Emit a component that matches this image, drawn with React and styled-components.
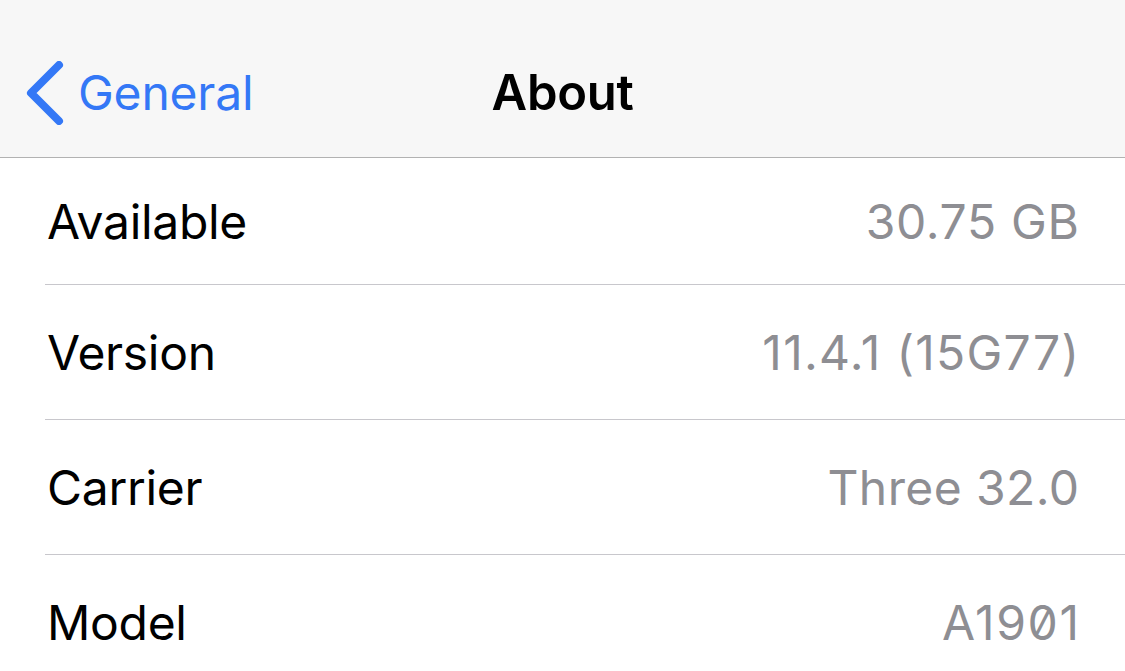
import React from "react";
import styled, { createGlobalStyle } from "styled-components";

const Global = createGlobalStyle`
  html, body { margin: 0; padding: 0; background: #ffffff; }
  body { font-family: Inter, "Liberation Sans", sans-serif; -webkit-font-smoothing: antialiased; }
`;

const Screen = styled.div`
  width: 1125px;
  height: 671px;
  overflow: hidden;
  background: #ffffff;
  display: flex;
  flex-direction: column;
`;

const NavBar = styled.header`
  flex: none;
  height: 158px;
  box-sizing: border-box;
  padding-top: 28px;
  background: #f7f7f7;
  border-bottom: 1px solid #b2b2b2;
  display: grid;
  grid-template-columns: 1fr auto 1fr;
  align-items: center;
`;

const BackButton = styled.div`
  display: flex;
  align-items: center;
  gap: 14px;
  padding-left: 26px;
  color: #3478f6;
  font-size: 48px;
  letter-spacing: -0.2px;
`;

const Title = styled.h1`
  margin: 0;
  font-size: 49px;
  font-weight: 600;
  color: #000;
  letter-spacing: -0.3px;
`;

const List = styled.div`
  display: flex;
  flex-direction: column;
`;

const Row = styled.div`
  height: ${(p) => p.$h}px;
  flex: none;
  margin-left: 45px;
  padding-right: 46px;
  padding-left: 2px;
  border-bottom: 1px solid #c8c7cc;
  display: flex;
  align-items: center;
  justify-content: space-between;
`;

const Label = styled.span`
  font-size: 48px;
  color: #000;
  letter-spacing: -0.3px;
`;

const Value = styled.span`
  font-size: 48px;
  color: #8e8e93;
  letter-spacing: ${(p) => p.$ls}px;
  margin-right: -${(p) => p.$ls}px;
  font-feature-settings: ${(p) => (p.$slashed ? '"zero" 1' : "normal")};
`;

const Chevron = () => (
  <svg width="38" height="64" viewBox="0 0 38 64">
    <path d="M33 4 L5 32 L33 60" fill="none" stroke="#3478f6" strokeWidth="8" strokeLinecap="round" strokeLinejoin="round" />
  </svg>
);

const rows = [
  { label: "Available", value: "30.75 GB", h: 126, ls: 0.7 },
  { label: "Version", value: "11.4.1 (15G77)", h: 134, ls: 1.3 },
  { label: "Carrier", value: "Three 32.0", h: 134, ls: 0.4 },
  { label: "Model", value: "A1901", h: 134, ls: 1.6, slashed: true },
];

export default function App() {
  return (
    <Screen>
      <Global />
      <NavBar>
        <BackButton>
          <Chevron />
          <span>General</span>
        </BackButton>
        <Title>About</Title>
        <div />
      </NavBar>
      <List>
        {rows.map((r) => (
          <Row key={r.label} $h={r.h}>
            <Label>{r.label}</Label>
            <Value $ls={r.ls} $slashed={r.slashed}>{r.value}</Value>
          </Row>
        ))}
      </List>
    </Screen>
  );
}
